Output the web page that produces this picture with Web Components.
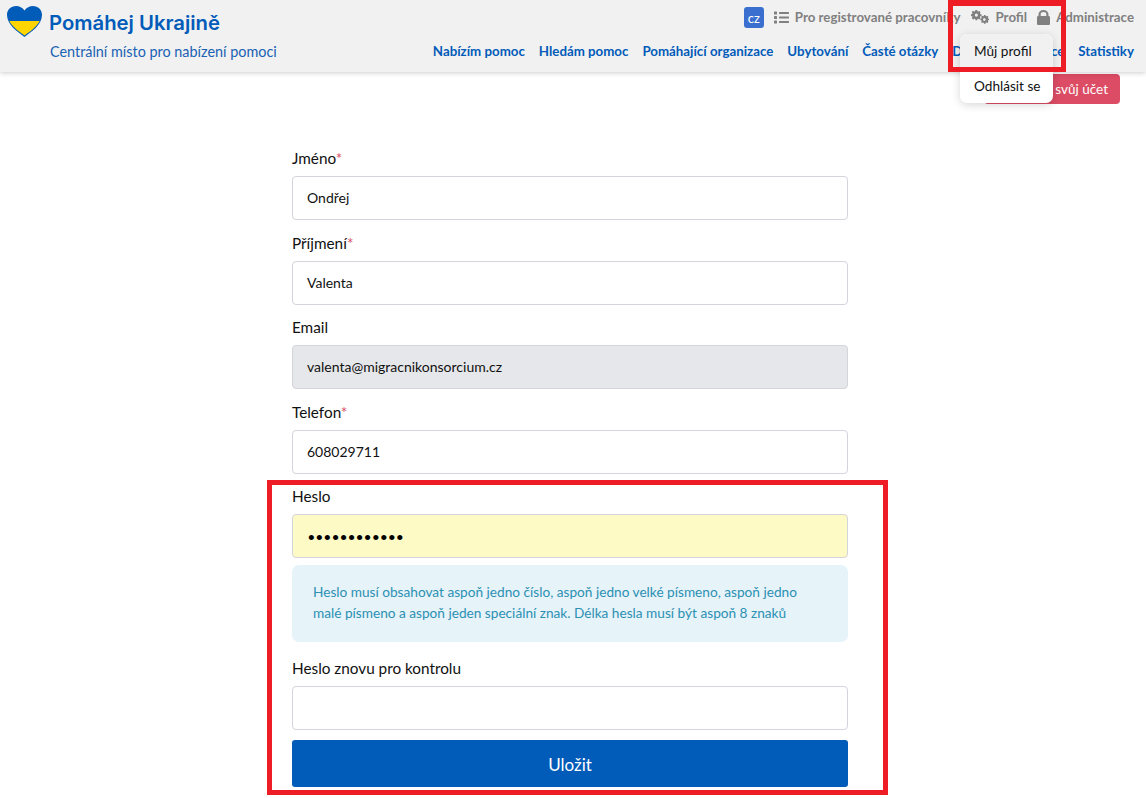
<!DOCTYPE html>
<html lang="cs">
<head>
<meta charset="utf-8">
<title>Pomáhej Ukrajině</title>
<style>
    html, body { margin: 0; padding: 0; background: #fff; }
    body { font-family: "Lato", "Liberation Sans", sans-serif; color: #111; height: 798px; overflow: hidden; position: relative; }
</style>
</head>
<body>
<pu-header></pu-header>
<pu-account-bar></pu-account-bar>
<pu-form>
    <pu-field label="Jméno" required>Ondřej</pu-field>
    <pu-field label="Příjmení" required>Valenta</pu-field>
    <pu-field label="Email" disabled>valenta@migracnikonsorcium.cz</pu-field>
    <pu-field label="Telefon" required>608029711</pu-field>
    <pu-field label="Heslo" filled dots>••••••••••••</pu-field>
    <pu-alert>Heslo musí obsahovat aspoň jedno číslo, aspoň jedno velké písmeno, aspoň jedno malé písmeno a aspoň jeden speciální znak. Délka hesla musí být aspoň 8 znaků</pu-alert>
    <pu-field label="Heslo znovu pro kontrolu" roomy></pu-field>
    <pu-button>Uložit</pu-button>
</pu-form>
<pu-profile-menu></pu-profile-menu>
<pu-mark style="left:948px;top:0;width:118px;height:72px;border-top-width:6px"></pu-mark>
<pu-mark style="left:267px;top:480px;width:621px;height:315px"></pu-mark>

<script>
window.customElements.define('pu-header', class extends HTMLElement {
    constructor() {
        super()
        let shadow = this.attachShadow({ mode: 'open' });
        shadow.innerHTML = `
        <style>
            :host {
                display: flex;
                justify-content: space-between;
                height: 72px;
                box-sizing: border-box;
                padding: 5px 12px 0 6px;
                background: #f1f1f1;
                box-shadow: 0 1px 5px rgba(0,0,0,.2);
                position: relative;
            }
            .brand { display: grid; grid-template-columns: 37px auto; grid-template-rows: 33px auto; column-gap: 6px; row-gap: 5px; }
            .brand svg { width: 37px; height: 33px; }
            .name { font-family: Inter, sans-serif; font-weight: 600; font-size: 20.300px; color: #015bb9; align-self: center; padding-top: 2px; }
            .sub { grid-column: 2; padding-left: 1px; font-size: 14.400px; color: #1a62b4; line-height: 18px; }
            .right { display: flex; flex-direction: column; align-items: flex-end; padding-top: 1px; }
            .top { display: flex; align-items: center; height: 22px; font-weight: 700; font-size: 13.300px; color: #808080; white-space: nowrap; }
            .top svg { display: block; flex: none; fill: #808080; }
            .cz { width: 20px; height: 21px; border-radius: 3px; background: #3a6fd0; color: #fff; font-weight: 400; font-size: 13px; display: flex; align-items: center; justify-content: center; margin-right: 10px; padding-top: 2px; box-sizing: border-box; }
            .nav { display: flex; gap: 14px; margin-top: 13.500px; font-weight: 700; font-size: 13.300px; line-height: 18px; color: #015bb9; white-space: nowrap; }
            .spread { width: 112px; white-space: normal; text-align: justify; text-align-last: justify; }
        </style>
        <div class="brand">
            <svg viewBox="0 0 37 33">
                <path d="M18.500 32 C12 27 1 20 1 10 C1 4.500 5 1 10 1 C13.500 1 16.500 2.500 18.500 5.500 C20.500 2.500 23.500 1 27 1 C32 1 36 4.500 36 10 C36 20 25 27 18.500 32 Z" fill="#015bb9"/>
                <path d="M3.300 16 H33.700 C30.500 22 23.500 27 18.500 30.400 C13.500 27 6.500 22 3.300 16 Z" fill="#ffd500"/>
            </svg>
            <div class="name">Pomáhej Ukrajině</div>
            <div class="sub">Centrální místo pro nabízení pomoci</div>
        </div>
        <div class="right">
            <div class="top">
                <span class="cz">cz</span>
                <svg viewBox="0 0 15 13" width="15" height="13" style="margin-right:6px">
                    <rect x="0" y="0.500" width="3" height="3" rx=".5"/><rect x="0" y="5" width="3" height="3" rx=".5"/><rect x="0" y="9.500" width="3" height="3" rx=".5"/>
                    <rect x="5" y="1" width="10" height="2" rx=".5"/><rect x="5" y="5.500" width="10" height="2" rx=".5"/><rect x="5" y="10" width="10" height="2" rx=".5"/>
                </svg>
                <span>Pro registrované pracovníky</span>
                <svg viewBox="0 0 18 15" width="18" height="15" style="margin:0 7px 0 10px">
                    <path fill-rule="evenodd" d="M5.300 0h2l.3 1.500 1 .4 1.300-.8 1.400 1.400-.8 1.300.4 1 1.500.3v2l-1.500.3-.4 1 .8 1.300-1.400 1.400-1.300-.8-1 .4-.3 1.500h-2l-.3-1.500-1-.4-1.300.8L.9 9.600l.8-1.300-.4-1L-.2 7V5l1.500-.3.4-1-.8-1.300 1.400-1.400 1.300.8 1-.4zM6.300 4.200a1.800 1.800 0 1 0 0 3.600 1.800 1.800 0 0 0 0-3.600z" transform="scale(.85)"/>
                    <path fill-rule="evenodd" d="M13 7h1.500l.2 1 .8.300.9-.5 1 1-.5.9.3.8 1 .2V12l-1 .2-.3.8.5.9-1 1-.9-.5-.8.3-.2 1H13l-.2-1-.8-.3-.9.5-1-1 .5-.9-.3-.8-1-.2v-1.300l1-.2.3-.8-.5-.9 1-1 .9.5.8-.3zM13.750 10.300a1.300 1.300 0 1 0 0 2.500 1.300 1.300 0 0 0 0-2.500z" transform="translate(0 -2)"/>
                </svg>
                <span>Profil</span>
                <svg viewBox="0 0 13 15" width="13" height="15" style="margin:0 6px 0 10px">
                    <path fill-rule="evenodd" d="M1.500 6V4.300a5 4.300 0 0 1 10 0V6h.2c.7 0 1.300.6 1.300 1.300v6.400c0 .7-.6 1.300-1.300 1.300H1.300C.6 15 0 14.400 0 13.700V7.300C0 6.600.6 6 1.300 6zM3.700 6h5.600V4.300a2.800 2.300 0 0 0-5.600 0z"/>
                </svg>
                <span>Administrace</span>
            </div>
            <nav class="nav">
                <span>Nabízím pomoc</span>
                <span>Hledám pomoc</span>
                <span>Pomáhající organizace</span>
                <span>Ubytování</span>
                <span>Časté otázky</span>
                <span class="spread">Další informace</span>
                <span>Statistiky</span>
            </nav>
        </div>
        `
    }
})

window.customElements.define('pu-account-bar', class extends HTMLElement {
    constructor() {
        super()
        let shadow = this.attachShadow({ mode: 'open' });
        shadow.innerHTML = `
        <style>
            :host { display: flex; justify-content: flex-end; padding: 2px 26px 0 0; height: 30px; }
            div { background: #dc4c64; color: #fff; font-size: 13.500px; line-height: 30px; border-radius: 4px; padding: 0 12px; white-space: nowrap; }
        </style>
        <div>Odstranit svůj účet</div>
        `
    }
})

window.customElements.define('pu-form', class extends HTMLElement {
    constructor() {
        super()
        let shadow = this.attachShadow({ mode: 'open' });
        shadow.innerHTML = `
        <style>
            :host { display: block; width: 556px; margin: 40px 0 0 292px; }
        </style>
        <slot></slot>
        `
    }
})

window.customElements.define('pu-field', class extends HTMLElement {
    constructor() {
        super()
        let shadow = this.attachShadow({ mode: 'open' });
        let req = this.hasAttribute('required') ? '<span class="req">*</span>' : ''
        shadow.innerHTML = `
        <style>
            :host { display: block; height: 84.500px; }
            :host([roomy]) { height: auto; margin-top: 12px; }
            label { display: block; height: 32px; font-size: 15.300px; line-height: 20px; color: #111; padding-top: 4px; box-sizing: border-box; }
            .req { color: #dc4c64; }
            .box { height: 44px; box-sizing: border-box; border: 1px solid #d3d4dc; border-radius: 4px; background: #fff; padding: 0 14px; font-size: 14px; line-height: 42px; color: #111; }
            :host([disabled]) .box { background: #e6e7ea; }
            :host([filled]) .box { background: #fefac5; }
            :host([dots]) .box { padding-left: 15px; font-size: 19px; font-family: "Liberation Sans", sans-serif; color: #000; letter-spacing: 1.400px; line-height: 46px; overflow: hidden; }
        </style>
        <label>${this.getAttribute('label')}${req}</label>
        <div class="box"><slot></slot></div>
        `
    }
})

window.customElements.define('pu-alert', class extends HTMLElement {
    constructor() {
        super()
        let shadow = this.attachShadow({ mode: 'open' });
        shadow.innerHTML = `
        <style>
            :host { display: block; box-sizing: border-box; height: 77px; margin-top: -2px; padding: 17px 30px 17px 21px; background: #e6f3f9; border-radius: 7px; color: #2b90b3; font-size: 13.650px; line-height: 21.500px; }
        </style>
        <slot></slot>
        `
    }
})

window.customElements.define('pu-button', class extends HTMLElement {
    constructor() {
        super()
        let shadow = this.attachShadow({ mode: 'open' });
        shadow.innerHTML = `
        <style>
            :host { display: block; height: 47px; margin-top: 10px; border-radius: 3px; background: #015bb9; color: #fff; font-size: 17px; line-height: 49px; text-align: center; }
        </style>
        <slot></slot>
        `
    }
})

window.customElements.define('pu-profile-menu', class extends HTMLElement {
    constructor() {
        super()
        let shadow = this.attachShadow({ mode: 'open' });
        shadow.innerHTML = `
        <style>
            :host { position: absolute; left: 960px; top: 34px; width: 93px; height: 69px; background: #fff; border-radius: 7px; box-shadow: 0 2px 8px rgba(0,0,0,.16); font-size: 13.600px; color: #111; overflow: hidden; }
            div { padding: 0 14px; height: 35px; line-height: 35px; white-space: nowrap; }
            .active { background: #f1f1f1; }
        </style>
        <div class="active">Můj profil</div>
        <div>Odhlásit se</div>
        `
    }
})

window.customElements.define('pu-mark', class extends HTMLElement {
    constructor() {
        super()
        let shadow = this.attachShadow({ mode: 'open' });
        shadow.innerHTML = `
        <style>
            :host { position: absolute; box-sizing: border-box; border: 5px solid #ee1c25; }
        </style>
        `
    }
})
</script>
</body>
</html>
